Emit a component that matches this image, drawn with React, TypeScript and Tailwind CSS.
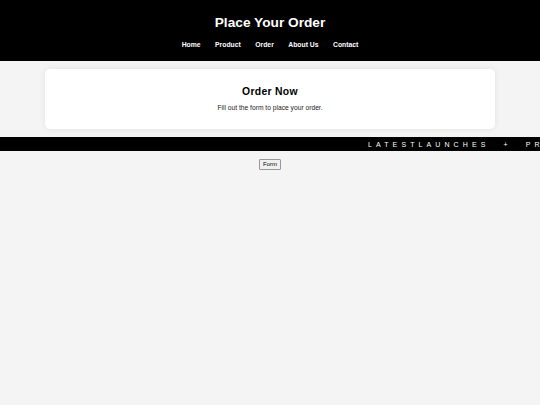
import React from "react";

const links = ["Home", "Product", "Order", "About Us", "Contact"];

export default function App() {
  return (
    <div className="min-h-[405px] bg-[#f4f4f4] font-['Liberation_Sans',Arial,sans-serif]">
      <header className="bg-black h-[61px] flex flex-col items-center pt-[14px]">
        <h1 className="text-white text-[13.7px] font-bold leading-[17px]">Place Your Order</h1>
        <nav className="flex gap-[14.5px] mt-[9px]">
          {links.map((l) => (
            <a key={l} className="text-white text-[6.8px] font-bold leading-[9px]">
              {l}
            </a>
          ))}
        </nav>
      </header>

      <div className="px-[45px] pt-[8px]">
        <section className="bg-white rounded-[5px] shadow-[0_0_6px_rgba(0,0,0,0.08)] h-[60px] flex flex-col items-center pt-[16px]">
          <h2 className="text-[10.4px] font-bold leading-[13px] text-black tracking-[0.3px]">Order Now</h2>
          <p className="text-[6.7px] leading-[8px] text-[#222] mt-[6px]">Fill out the form to place your order.</p>
        </section>
      </div>

      <div className="mt-[8px] bg-black h-[14px] overflow-hidden whitespace-nowrap flex items-center pl-[368px]">
        <span className="text-white text-[7px] tracking-[4.1px] leading-[9px]">
          LATESTLAUNCHES<span className="inline-block w-[14px]" />+<span className="inline-block w-[14px]" />PRE-ORDER NOW
        </span>
      </div>

      <div className="flex justify-center pt-[8px]">
        <button className="text-[6px] leading-[7px] text-black bg-[#f0f0f0] border border-[#999] px-[3px] py-[1px] rounded-[1px]">
          Form
        </button>
      </div>
    </div>
  );
}
